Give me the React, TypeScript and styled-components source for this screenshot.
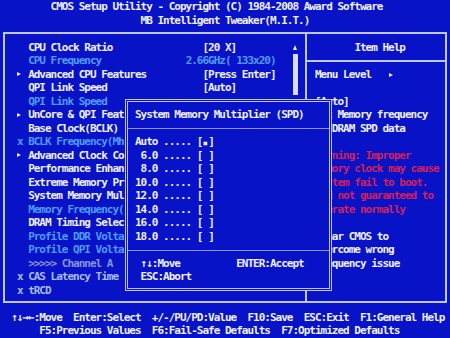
import styled, { createGlobalStyle } from 'styled-components'

type Tone = 'text' | 'dim' | 'pale' | 'grey' | 'warn'

const tones: Record<Tone, string> = {
  text: '#eef0ff',
  dim: '#4f9cff',
  pale: '#a6bcf4',
  grey: '#8795dc',
  warn: '#d41f5c',
}

const BLUE = '#0812c6'
const EDGE = '#c0c6f2'

type Item = {
  label: string
  value?: string
  tone?: Tone
  mark?: 'sub' | 'x'
  lead?: number
}

// rows from the 5th on sit under the popup, so their values never show
const items: Item[] = [
  { label: 'CPU Clock Ratio', value: '[20 X]' },
  { label: 'CPU Frequency', value: '2.66GHz( 133x20)', tone: 'dim', lead: 3 },
  { label: 'Advanced CPU Features', value: '[Press Enter]', mark: 'sub' },
  { label: 'QPI Link Speed', value: '[Auto]' },
  { label: 'QPI Link Speed', tone: 'dim' },
  { label: 'UnCore & QPI Feat', mark: 'sub' },
  { label: 'Base Clock(BCLK)' },
  { label: 'BCLK Frequency(Mh', tone: 'dim', mark: 'x' },
  { label: 'Advanced Clock Co', mark: 'sub' },
  { label: 'Performance Enhan' },
  { label: 'Extreme Memory Pr' },
  { label: 'System Memory Mul' },
  { label: 'Memory Frequency(', tone: 'dim' },
  { label: 'DRAM Timing Selec' },
  { label: 'Profile DDR Volta', tone: 'dim' },
  { label: 'Profile QPI Volta', tone: 'dim' },
  { label: '>>>>> Channel A', tone: 'grey' },
  { label: 'CAS Latency Time', tone: 'pale', mark: 'x' },
  { label: 'tRCD', tone: 'pale', mark: 'x' },
]

const help: { text: string; tone?: Tone }[] = [
  { text: '[Auto]' },
  { text: 'Set Memory frequency' },
  { text: 'by DRAM SPD data' },
  { text: '' },
  { text: 'Warning: Improper', tone: 'warn' },
  { text: 'Memory clock may cause', tone: 'warn' },
  { text: 'System fail to boot.', tone: 'warn' },
  { text: 'and not guaranteed to', tone: 'warn' },
  { text: 'Operate normally', tone: 'warn' },
  { text: '' },
  { text: 'Clear CMOS to' },
  { text: 'Overcome wrong' },
  { text: 'Frequency issue' },
]

const ratios = ['Auto', '6.0', '8.0', '10.0', '12.0', '14.0', '16.0', '18.0']

const App = () => {
  return (
    <Screen>
      <GlobalStyle />
      <Line>{'         CMOS Setup Utility - Copyright (C) 1984-2008 Award Software'}</Line>
      <Line>{'                         MB Intelligent Tweaker(M.I.T.)'}</Line>

      <Frame>
        <MainPanel>
          <ItemList>
            {items.map((item, i) => (
              <ItemRow key={i}>
                <Marker $tone={item.tone ?? 'text'}>
                  {item.mark === 'sub' && <Pointer />}
                  {item.mark === 'x' && 'x'}
                </Marker>
                <Label $tone={item.tone ?? 'text'}>{item.label}</Label>
                {item.value && (
                  <Value $tone={item.tone ?? 'text'} $lead={item.lead ?? 0}>{item.value}</Value>
                )}
              </ItemRow>
            ))}
          </ItemList>
          <ScrollTrack>
            <ArrowCell><UpArrow /></ArrowCell>
            <Thumb />
          </ScrollTrack>
        </MainPanel>

        <HelpPanel>
          <HelpTitle>Item Help</HelpTitle>
          <HelpRule />
          <HelpLine>{'Menu Level   '}<Pointer /></HelpLine>
          <HelpLine />
          {help.map((h, i) => (
            <HelpLine key={i} $tone={h.tone}>{h.text}</HelpLine>
          ))}
        </HelpPanel>

        <Popup>
          <PopupLine>System Memory Multiplier (SPD)</PopupLine>
          <PopupRule />
          {ratios.map((r, i) => (
            <PopupLine key={r}>
              {`${r.padStart(4)} ..... [`}
              <Mark>{i === 0 ? '■' : ' '}</Mark>
              {']'}
            </PopupLine>
          ))}
          <PopupRule />
          <PopupLine>{' ↑↓:Move          ENTER:Accept'}</PopupLine>
          <PopupLine>{' ESC:Abort'}</PopupLine>
        </Popup>
      </Frame>

      <Footer>
        <Line>{'  ↑↓→←:Move  Enter:Select  +/-/PU/PD:Value  F10:Save  ESC:Exit  F1:General Help'}</Line>
        <Line>{'       F5:Previous Values  F6:Fail-Safe Defaults  F7:Optimized Defaults'}</Line>
      </Footer>
    </Screen>
  )
}

const GlobalStyle = createGlobalStyle`
  html, body {
    margin: 0;
    padding: 0;
    background: ${BLUE};
  }
`

const Screen = styled.div`
  width: 450px;
  height: 338px;
  overflow: hidden;
  background: ${BLUE};
  color: ${tones.text};
  font-family: "DejaVu Sans Mono", "Liberation Mono", monospace;
  font-weight: bold;
  font-size: 11px;
  letter-spacing: -0.9976px;
  line-height: 13.52px;
`

const Line = styled.div<{ $tone?: Tone }>`
  height: 13.52px;
  white-space: pre;
  overflow: hidden;
  color: ${p => tones[p.$tone ?? 'text']};
`

const Frame = styled.div`
  position: relative;
  display: flex;
  margin: 5px 3px 0;
  height: 267.4px;
  border: 2px solid ${EDGE};
`

const MainPanel = styled.div`
  display: flex;
  width: 300px;
  padding: 6.52px 0 4px;
  box-sizing: border-box;
`

const ItemList = styled.div`
  flex: 1;
`

const ItemRow = styled.div`
  display: grid;
  grid-template-columns: 11.25px 174.375px 1fr;
  padding-left: 11.875px;
  height: 13.52px;
  white-space: pre;
`

const Marker = styled.span<{ $tone: Tone }>`
  display: flex;
  align-items: center;
  color: ${p => tones[p.$tone]};
`

const Label = styled.span<{ $tone: Tone }>`
  overflow: hidden;
  color: ${p => tones[p.$tone]};
`

const Value = styled.span<{ $tone: Tone; $lead: number }>`
  margin-left: ${p => -p.$lead * 5.625}px;
  color: ${p => tones[p.$tone]};
`

const Pointer = styled.span`
  display: inline-block;
  width: 0;
  height: 0;
  margin-left: 0.5px;
  vertical-align: 1px;
  border-left: 4px solid currentColor;
  border-top: 2.5px solid transparent;
  border-bottom: 2.5px solid transparent;
`

const ScrollTrack = styled.div`
  display: flex;
  flex-direction: column;
  width: 5.625px;
  margin-right: 6.875px;
`

const ArrowCell = styled.div`
  display: flex;
  align-items: center;
  justify-content: center;
  height: 13.52px;
`

const UpArrow = styled.span`
  width: 0;
  height: 0;
  border-bottom: 5px solid ${tones.text};
  border-left: 2.5px solid transparent;
  border-right: 2.5px solid transparent;
`

const Thumb = styled.div`
  width: 5px;
  height: 40.56px;
  background: #d8dcf6;
`

const HelpPanel = styled.div`
  flex: 1;
  border-left: 2px solid ${EDGE};
  padding-top: 6.52px;
`

const HelpTitle = styled(Line)`
  padding-left: 47.375px;
`

const HelpRule = styled.div`
  display: flex;
  align-items: center;
  height: 13.52px;

  &::after {
    content: '';
    flex: 1;
    height: 2px;
    background: ${EDGE};
  }
`

const HelpLine = styled(Line)`
  padding-left: 8px;
`

const Popup = styled.div`
  position: absolute;
  left: 119.5px;
  top: 64.96px;
  width: 207px;
  height: 192px;
  box-sizing: border-box;
  padding-top: 6.16px;
  border: 3px double ${EDGE};
  background: ${BLUE};
`

const PopupLine = styled(Line)`
  padding-left: 7.5px;
`

const PopupRule = styled.div`
  display: flex;
  align-items: center;
  height: 13.52px;

  &::after {
    content: '';
    flex: 1;
    height: 1px;
    background: #8a92ee;
  }
`

const Mark = styled.span`
  display: inline-block;
  width: 5.625px;
  letter-spacing: 0;
  text-align: center;
  font-size: 6px;
`

const Footer = styled.div`
  margin-top: 7.52px;
`

export default App
